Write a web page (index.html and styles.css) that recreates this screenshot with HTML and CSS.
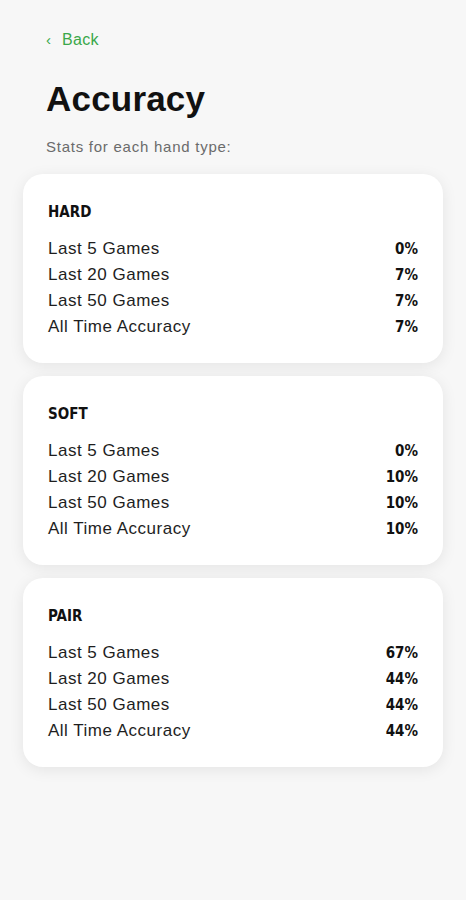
FILE: index.html
```html
<!DOCTYPE html>
<html>
<head>
<meta charset="utf-8" />
<title>Accuracy</title>
<link rel="stylesheet" href="styles.css">
</head>
<body>
	<div id="main_page">
		<div class="top">
			<a class="back" href="#"><span class="chev">&#8249;</span> Back</a>
			<h1>Accuracy</h1>
			<p class="sub">Stats for each hand type:</p>
		</div>
		<div class="cards">
			<div class="card">
				<h2>HARD</h2>
				<ul>
					<li><span>Last 5 Games</span><b>0%</b></li>
					<li><span>Last 20 Games</span><b>7%</b></li>
					<li><span>Last 50 Games</span><b>7%</b></li>
					<li><span>All Time Accuracy</span><b>7%</b></li>
				</ul>
			</div>
			<div class="card">
				<h2>SOFT</h2>
				<ul>
					<li><span>Last 5 Games</span><b>0%</b></li>
					<li><span>Last 20 Games</span><b>10%</b></li>
					<li><span>Last 50 Games</span><b>10%</b></li>
					<li><span>All Time Accuracy</span><b>10%</b></li>
				</ul>
			</div>
			<div class="card">
				<h2>PAIR</h2>
				<ul>
					<li><span>Last 5 Games</span><b>67%</b></li>
					<li><span>Last 20 Games</span><b>44%</b></li>
					<li><span>Last 50 Games</span><b>44%</b></li>
					<li><span>All Time Accuracy</span><b>44%</b></li>
				</ul>
			</div>
		</div>
	</div>
</body>
</html>
```
FILE: styles.css
```css
*{ padding:0; margin:0; }
ul li, li{list-style:none;}
body{background:#f7f7f7; font-family:"Liberation Sans", Arial, sans-serif; color:#111;}
a{text-decoration:none;}
#main_page{width:466px; padding:30px 0 40px;}
.top{padding:0 46px;}
.back{display:block; color:#3aa84a; font-size:16px; line-height:20px; letter-spacing:0.3px;}
.back .chev{font-size:15px; margin-right:6px;}
h1{font-size:35px; font-weight:bold; line-height:42px; margin-top:28px; letter-spacing:0.2px;}
.sub{color:#6b6b6b; font-size:15px; line-height:20px; margin-top:17px; letter-spacing:0.75px;}
.cards{padding:0 23px; margin-top:17px; display:flex; flex-direction:column; gap:13px;}
.card{background:#fff; border-radius:20px; padding:28px 25px 23px; box-shadow:0 3px 15px rgba(0,0,0,0.08);}
.card h2{font-family:"DejaVu Sans Condensed", "DejaVu Sans", sans-serif; font-stretch:condensed; font-size:15px; font-weight:bold; line-height:20px; color:#111;}
.card ul{margin-top:14px;}
.card li{display:flex; justify-content:space-between; align-items:center; height:26px;}
.card li span{font-size:17px; color:#1e1e1e; letter-spacing:0.5px;}
.card li b{font-family:"DejaVu Sans Condensed", "DejaVu Sans", sans-serif; font-stretch:condensed; font-size:15px; font-weight:bold; color:#111;}
```
